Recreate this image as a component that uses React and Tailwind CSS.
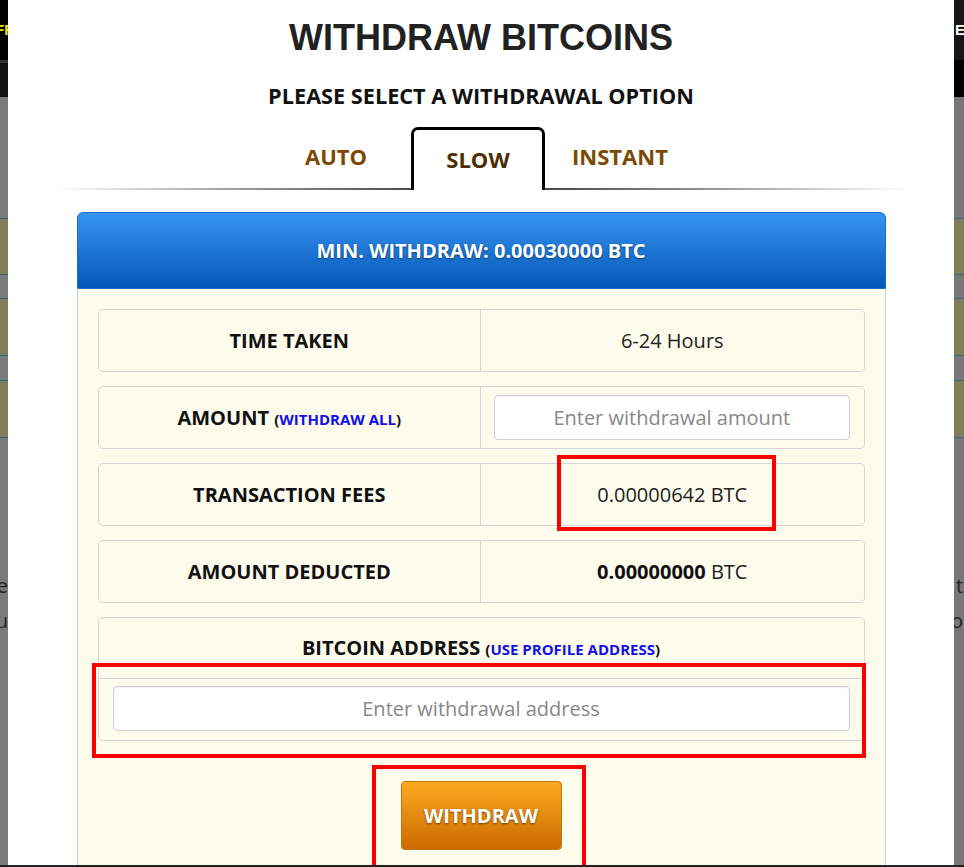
import React from "react";

function LeftStrip() {
  return (
    <div className="w-[8px] shrink-0 flex flex-col overflow-hidden">
      <div className="h-[60px] bg-black flex items-start pt-[21px] overflow-hidden">
        <span className="-ml-[5px] whitespace-nowrap text-[15px] leading-[18px] font-bold text-[#e8e800] font-['Liberation_Sans',sans-serif]">
          FF
        </span>
      </div>
      <div className="h-[3px] bg-[#333]" />
      <div className="h-[34px] bg-[#111]" />
      <div className="flex-1 bg-[#7a7a7a] flex flex-col">
        <div className="mt-[121px] h-[57px] bg-[#807f5c] border-y border-[#35657a]" />
        <div className="mt-[23px] h-[58px] bg-[#807f5c] border-y border-[#35657a]" />
        <div className="mt-[24px] h-[58px] bg-[#807f5c] border-y border-[#35657a]" />
        <div className="mt-[130px] flex justify-end text-[20px] leading-[35px] text-[#222] whitespace-nowrap">
          e
        </div>
        <div className="flex justify-end text-[20px] leading-[35px] text-[#222] whitespace-nowrap">
          u
        </div>
      </div>
    </div>
  );
}

function RightStrip() {
  return (
    <div className="w-[10px] shrink-0 flex flex-col overflow-hidden">
      <div className="h-[60px] bg-[#161616] flex items-start pt-[21px] overflow-hidden">
        <span className="ml-[1px] whitespace-nowrap text-[15px] leading-[18px] font-bold text-white font-['Liberation_Sans',sans-serif]">
          E
        </span>
      </div>
      <div className="h-[37px] bg-black" />
      <div className="flex-1 bg-[#777] flex flex-col">
        <div className="mt-[121px] h-[57px] bg-[#807f5c] border-y border-[#35657a]" />
        <div className="mt-[23px] h-[58px] bg-[#807f5c] border-y border-[#35657a]" />
        <div className="mt-[24px] h-[58px] bg-[#807f5c] border-y border-[#35657a]" />
        <div className="mt-[130px] pl-[2px] text-[20px] leading-[35px] text-[#222] whitespace-nowrap">
          t
        </div>
        <div className="-ml-[3px] text-[20px] leading-[35px] text-[#222] whitespace-nowrap">
          o<span className="text-[#d8b800]">l</span>
        </div>
      </div>
    </div>
  );
}

function Row({ label, children }) {
  return (
    <div className="flex h-[63px] border border-[#d6d6d6] rounded-[5px]">
      <div className="w-1/2 flex items-center justify-center border-r border-[#d6d6d6] font-bold text-[20px] text-[#111]">
        {label}
      </div>
      <div className="flex-1 flex items-center justify-center text-[20px] text-[#222]">
        {children}
      </div>
    </div>
  );
}

export default function App() {
  return (
    <div className="relative w-full h-[867px] overflow-hidden flex bg-[#777] font-['Open_Sans',sans-serif]">
      <LeftStrip />

      <div className="w-[946px] shrink-0 bg-white flex flex-col items-center">
        <h1 className="mt-[18px] text-[36px] leading-[40px] font-bold text-[#222] font-['Liberation_Sans',sans-serif]">
          WITHDRAW BITCOINS
        </h1>
        <p className="mt-[24px] text-[21.7px] leading-[28px] font-bold text-[#111]">
          PLEASE SELECT A WITHDRAWAL OPTION
        </p>

        <div className="mt-[17px] flex justify-center pr-[6px] h-[63px]">
          <div className="w-[150px] pt-[15px] text-center text-[22px] leading-[28px] font-bold text-[#7b4a00]">
            AUTO
          </div>
          <div className="relative z-10 w-[134px] h-[63px] bg-white border-[3px] border-b-0 border-black rounded-t-[7px] pt-[15px] text-center text-[22px] leading-[28px] font-bold text-[#4a3000]">
            SLOW
          </div>
          <div className="w-[150px] pt-[15px] text-center text-[22px] leading-[28px] font-bold text-[#7b4a00]">
            INSTANT
          </div>
        </div>
        <div className="-mt-[2px] h-[2px] w-[855px] bg-[linear-gradient(to_right,transparent,#9a9a9a_22%,#2a2a2a_50%,#9a9a9a_78%,transparent)]" />

        <div className="mt-[22px] w-[809px] flex-1 flex flex-col">
          <div className="h-[77px] rounded-t-[6px] border border-[#1a6dcc] bg-[linear-gradient(to_bottom,#3894f1,#0358b6)] flex items-center justify-center text-white text-[20px] font-bold [text-shadow:0_1px_2px_rgba(0,0,0,0.45)]">
            MIN. WITHDRAW: 0.00030000 BTC
          </div>
          <div className="flex-1 bg-[#fdfbec] border-x border-[#d0d0d0] px-[20px] pt-[20px] flex flex-col items-center">
            <div className="w-[767px] flex flex-col gap-[14px]">
              <Row label="TIME TAKEN">6-24 Hours</Row>
              <Row
                label={
                  <span>
                    AMOUNT{" "}
                    <span className="text-[15px]">
                      (<span className="text-[#1010ee]">WITHDRAW ALL</span>)
                    </span>
                  </span>
                }
              >
                <input
                  type="text"
                  placeholder="Enter withdrawal amount"
                  className="ml-[13px] mr-[14px] mb-[1px] w-full h-[45px] bg-white border border-[#cfcfcf] rounded-[4px] text-center text-[20px] placeholder:text-[#888] shadow-[inset_0_1px_2px_rgba(0,0,0,0.06)] outline-none"
                />
              </Row>
              <Row label="TRANSACTION FEES">0.00000642 BTC</Row>
              <Row label="AMOUNT DEDUCTED">
                <span>
                  <span className="font-bold text-[#111]">0.00000000</span> BTC
                </span>
              </Row>

              <div className="border border-[#d6d6d6] rounded-[5px] flex flex-col">
                <div className="h-[61px] flex items-center justify-center border-b border-[#d6d6d6] font-bold text-[20px] text-[#111]">
                  <span>
                    BITCOIN ADDRESS{" "}
                    <span className="text-[15px]">
                      (<span className="text-[#1010ee]">USE PROFILE ADDRESS</span>)
                    </span>
                  </span>
                </div>
                <div className="px-[14px] pt-[7px] pb-[9px]">
                  <input
                    type="text"
                    placeholder="Enter withdrawal address"
                    className="w-full h-[45px] bg-white border border-[#cfcfcf] rounded-[4px] text-center text-[20px] placeholder:text-[#888] shadow-[inset_0_1px_2px_rgba(0,0,0,0.06)] outline-none"
                  />
                </div>
              </div>
            </div>

            <button
              type="button"
              className="mt-[40px] w-[161px] h-[69px] rounded-[4px] border border-[#c2780f] bg-[linear-gradient(to_bottom,#fdaa20,#cc6a00)] text-white text-[20px] font-bold [text-shadow:0_1px_2px_rgba(0,0,0,0.5)]"
            >
              WITHDRAW
            </button>
          </div>
        </div>
      </div>

      <RightStrip />

      <div className="absolute left-[557px] top-[455px] w-[219px] h-[76px] border-[4px] border-[#ff0000]" />
      <div className="absolute left-[92px] top-[663px] w-[774px] h-[95px] border-[4px] border-[#ff0000]" />
      <div className="absolute left-[372px] top-[765px] w-[214px] h-[120px] border-[4px] border-[#ff0000]" />
      <div className="absolute left-0 bottom-0 w-full h-[2px] bg-[#222]" />
    </div>
  );
}
